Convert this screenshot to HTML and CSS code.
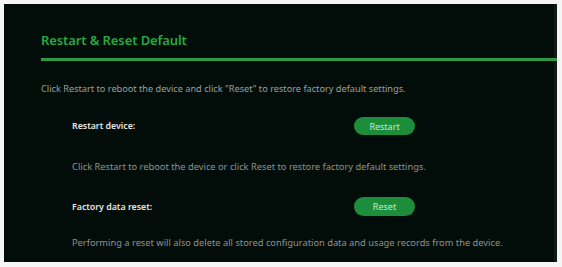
FILE: index.html
```html
<!DOCTYPE html>
<html lang="en">
<head>
<meta charset="utf-8">
<title>Restart &amp; Reset Default</title>
<link rel="stylesheet" href="styles.css">
</head>
<body>
<main class="panel">
  <h1 class="title">Restart &amp; Reset Default</h1>
  <div class="rule"></div>
  <p class="desc">Click Restart to reboot the device and click "Reset" to restore factory default settings.</p>
  <div class="row row-first">
    <span class="label">Restart device:</span>
    <button class="btn">Restart</button>
  </div>
  <p class="note note-first">Click Restart to reboot the device or click Reset to restore factory default settings.</p>
  <div class="row row-second">
    <span class="label">Factory data reset:</span>
    <button class="btn btn-tall">Reset</button>
  </div>
  <p class="note note-second">Performing a reset will also delete all stored configuration data and usage records from the device.</p>
</main>
</body>
</html>
```
FILE: styles.css
```css
html, body {
  margin: 0;
  padding: 0;
  background: #f4f5f4;
}
body {
  width: 562px;
  height: 267px;
  overflow: hidden;
  font-family: "Noto Sans", "Open Sans", sans-serif;
}
.panel {
  margin: 4px 0 0 4px;
  width: 553px;
  height: 258px;
  box-sizing: border-box;
  background: #020d0a;
  border-right: 3px solid #101a17;
  padding-left: 37px;
  display: flex;
  flex-direction: column;
}
.title {
  margin: 26px 0 0 0;
  font-size: 13px;
  line-height: 20px;
  font-weight: 600;
  color: #27a93f;
  letter-spacing: -0.1px;
}
.rule {
  margin-top: 8px;
  height: 3px;
  margin-right: -3px;
  background: #2c9a43;
}
.desc {
  margin: 21px 0 0 0;
  font-size: 9.2px;
  line-height: 14px;
  color: #9aa09c;
}
.row {
  display: flex;
  align-items: center;
  padding-left: 31px;
}
.row-first { margin-top: 21px; }
.row-second { margin-top: 23px; }
.label {
  width: 282px;
  font-size: 8.8px;
  font-weight: 600;
  color: #e4e6e4;
}
.btn {
  width: 61px;
  height: 18px;
  border: none;
  border-radius: 10px;
  background: #1c8e3b;
  color: #c9e6cf;
  font-family: inherit;
  font-size: 9px;
  padding: 0;
}
.btn-tall { height: 19px; }
.note {
  margin: 0;
  padding-left: 31px;
  font-size: 9.3px;
  line-height: 14px;
  color: #8e948f;
}
.note-first { margin-top: 25px; }
.note-second { margin-top: 20px; }
```
